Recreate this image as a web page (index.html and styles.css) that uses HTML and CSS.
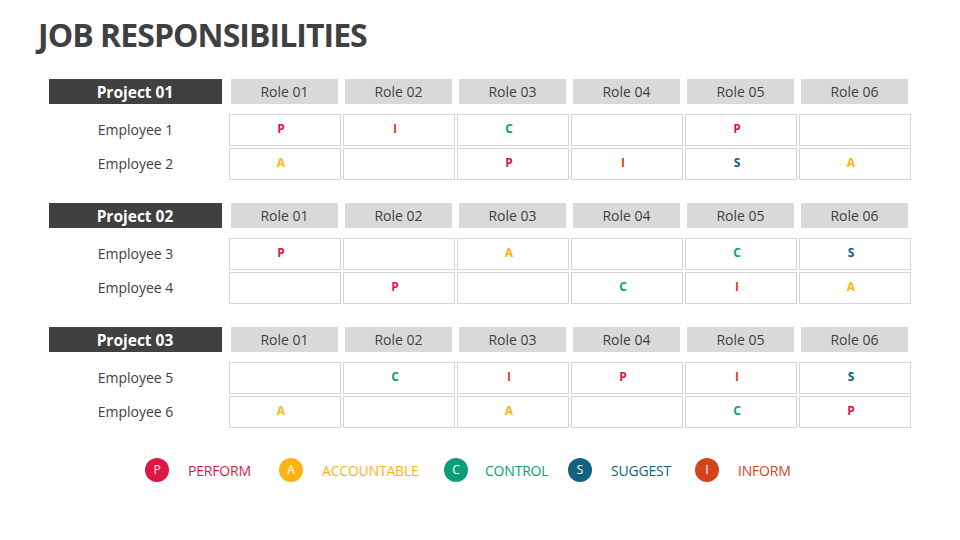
FILE: index.html
```html
<!DOCTYPE html>
<html>
<head>
<meta charset="utf-8">
<link rel="stylesheet" href="styles.css">
</head>
<body>
<div class="slide">
  <h1 class="title">JOB RESPONSIBILITIES</h1>

  <div class="matrix">
    <div class="group">
      <div class="row head">
        <div class="label project">Project 01</div>
        <div class="cells">
          <div class="role">Role 01</div><div class="role">Role 02</div><div class="role">Role 03</div>
          <div class="role">Role 04</div><div class="role">Role 05</div><div class="role">Role 06</div>
        </div>
      </div>
      <div class="row">
        <div class="label emp">Employee 1</div>
        <div class="cells">
          <div class="cell p">P</div><div class="cell i">I</div><div class="cell c">C</div>
          <div class="cell"></div><div class="cell p">P</div><div class="cell"></div>
        </div>
      </div>
      <div class="row">
        <div class="label emp">Employee 2</div>
        <div class="cells">
          <div class="cell a">A</div><div class="cell"></div><div class="cell p">P</div>
          <div class="cell i">I</div><div class="cell s">S</div><div class="cell a">A</div>
        </div>
      </div>
    </div>

    <div class="group">
      <div class="row head">
        <div class="label project">Project 02</div>
        <div class="cells">
          <div class="role">Role 01</div><div class="role">Role 02</div><div class="role">Role 03</div>
          <div class="role">Role 04</div><div class="role">Role 05</div><div class="role">Role 06</div>
        </div>
      </div>
      <div class="row">
        <div class="label emp">Employee 3</div>
        <div class="cells">
          <div class="cell p">P</div><div class="cell"></div><div class="cell a">A</div>
          <div class="cell"></div><div class="cell c">C</div><div class="cell s">S</div>
        </div>
      </div>
      <div class="row">
        <div class="label emp">Employee 4</div>
        <div class="cells">
          <div class="cell"></div><div class="cell p">P</div><div class="cell"></div>
          <div class="cell c">C</div><div class="cell i">I</div><div class="cell a">A</div>
        </div>
      </div>
    </div>

    <div class="group">
      <div class="row head">
        <div class="label project">Project 03</div>
        <div class="cells">
          <div class="role">Role 01</div><div class="role">Role 02</div><div class="role">Role 03</div>
          <div class="role">Role 04</div><div class="role">Role 05</div><div class="role">Role 06</div>
        </div>
      </div>
      <div class="row">
        <div class="label emp">Employee 5</div>
        <div class="cells">
          <div class="cell"></div><div class="cell c">C</div><div class="cell i">I</div>
          <div class="cell p">P</div><div class="cell i">I</div><div class="cell s">S</div>
        </div>
      </div>
      <div class="row">
        <div class="label emp">Employee 6</div>
        <div class="cells">
          <div class="cell a">A</div><div class="cell"></div><div class="cell a">A</div>
          <div class="cell"></div><div class="cell c">C</div><div class="cell p">P</div>
        </div>
      </div>
    </div>
  </div>

  <div class="legend">
    <div class="item p"><span class="dot">P</span><span class="name">PERFORM</span></div>
    <div class="item a"><span class="dot">A</span><span class="name">ACCOUNTABLE</span></div>
    <div class="item c"><span class="dot">C</span><span class="name">CONTROL</span></div>
    <div class="item s"><span class="dot">S</span><span class="name">SUGGEST</span></div>
    <div class="item i"><span class="dot">I</span><span class="name">INFORM</span></div>
  </div>
</div>
</body>
</html>
```

FILE: styles.css
```css
* { box-sizing: border-box; }
html, body { margin: 0; padding: 0; background: #fff; }
body { font-family: "Open Sans", "Liberation Sans", sans-serif; color: #404040; }

.slide { width: 960px; height: 540px; overflow: hidden; position: relative; }

.title {
  margin: 0;
  padding: 14px 0 0 38px;
  font-size: 32px;
  font-weight: 700;
  line-height: 42px;
  color: #404040;
  letter-spacing: -0.95px;
}

.matrix {
  margin: 23px 0 0 49px;
  display: flex;
  flex-direction: column;
  gap: 23px;
}

.group { display: flex; flex-direction: column; gap: 2px; }

.row { display: flex; height: 32px; }
.row.head { height: 25px; margin-bottom: 8px; }

.label {
  width: 180px;
  flex: none;
  display: flex;
  align-items: center;
}
.project {
  width: 173px;
  margin-right: 7px;
  background: #404040;
  color: #fff;
  font-weight: 700;
  font-size: 15.5px;
  justify-content: center;
  padding-right: 1px;
}
.emp {
  font-size: 14px;
  justify-content: center;
  padding: 0 7px 2px 0;
  color: #404040;
}

.cells {
  display: grid;
  grid-template-columns: repeat(6, 112px);
  column-gap: 2px;
}

.role {
  margin: 0 3px 0 2px;
  background: #d9d9d9;
  font-size: 14px;
  display: flex;
  align-items: center;
  justify-content: center;
  color: #404040;
}

.cell {
  border: 1px solid #d6d6d6;
  display: flex;
  align-items: center;
  justify-content: center;
  padding: 0 8px 3px 0;
  font-size: 12px;
  font-weight: 700;
}

.p { color: #dc1847; }
.a { color: #ffb40f; }
.c { color: #0a9e77; }
.s { color: #12617f; }
.i { color: #d4431c; }

.legend {
  display: flex;
  align-items: center;
  margin: 30px 0 0 145px;
}
.item { display: flex; align-items: center; gap: 19px; flex: none; }
.item.p { width: 134px; }
.item.a { width: 165px; }
.item.c { width: 124px; }
.item.s { width: 127px; }
.item.c { gap: 17px; }
.dot {
  width: 24px;
  height: 24px;
  border-radius: 50%;
  color: #fff;
  font-size: 12px;
  display: flex;
  align-items: center;
  justify-content: center;
  padding-bottom: 1px;
}
.item.p .dot { background: #dc1847; }
.item.a .dot { background: #ffb40f; }
.item.c .dot { background: #0a9e77; }
.item.s .dot { background: #12617f; }
.item.i .dot { background: #d4431c; }
.name { font-size: 14px; letter-spacing: -0.2px; }
```
